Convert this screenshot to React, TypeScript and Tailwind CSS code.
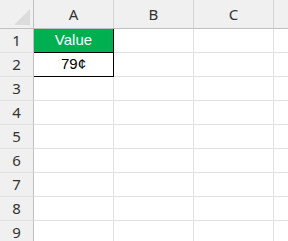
const cols = ["A", "B", "C"];
const rows = [1, 2, 3, 4, 5, 6, 7, 8, 9];

const cellFont = { fontFamily: "'Liberation Sans', Arial, sans-serif" };

export default function App() {
  return (
    <div className="w-[288px] h-[241px] overflow-hidden bg-white font-['Noto_Sans',sans-serif]">
      {/* column headers */}
      <div className="flex h-[29px] bg-[#f0f0f0] border-b border-[#c0c0c0]">
        <div className="relative w-[34px] shrink-0 border-r border-[#c0c0c0]">
          <div className="absolute left-[14px] top-[9px] w-0 h-0 border-l-[16px] border-l-transparent border-b-[16px] border-b-[#dcdcdc]" />
        </div>
        {cols.map((c) => (
          <div
            key={c}
            className="w-[80px] shrink-0 border-r border-[#d4d4d4] flex items-center justify-center text-[15px] text-[#333] pt-[1px]"
          >
            {c}
          </div>
        ))}
        <div className="flex-1" />
      </div>

      {rows.map((r) => (
        <div key={r} className="flex h-[24px]">
          <div className="w-[34px] shrink-0 bg-[#f0f0f0] border-r border-[#c0c0c0] border-b border-b-[#e0e0e0] flex items-center justify-center text-[15px] text-[#333]">
            {r}
          </div>
          {cols.map((c) => {
            if (c === "A" && r === 1) {
              return (
                <div
                  key={c}
                  style={cellFont}
                  className="w-[80px] shrink-0 bg-[#00b050] border-r border-b border-black flex items-center justify-center text-[15px] text-white"
                >
                  Value
                </div>
              );
            }
            if (c === "A" && r === 2) {
              return (
                <div
                  key={c}
                  style={cellFont}
                  className="w-[80px] shrink-0 border-r border-b border-black flex items-center justify-center text-[15px] text-black"
                >
                  79¢
                </div>
              );
            }
            return (
              <div
                key={c}
                className="w-[80px] shrink-0 border-r border-b border-[#e1e1e1]"
              />
            );
          })}
          <div className="flex-1 border-b border-[#e1e1e1]" />
        </div>
      ))}
    </div>
  );
}
